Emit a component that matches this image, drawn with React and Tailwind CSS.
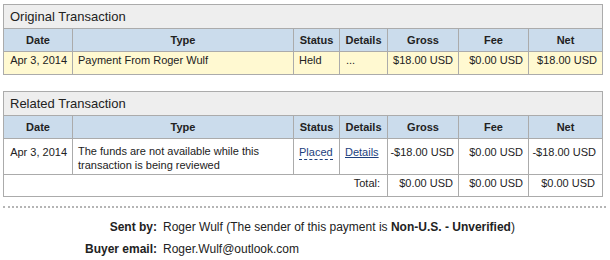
const COLS = [
  { key: 'date', label: 'Date', w: 'w-[69px]' },
  { key: 'type', label: 'Type', w: 'w-[221px]' },
  { key: 'status', label: 'Status', w: 'w-[46px]' },
  { key: 'details', label: 'Details', w: 'w-[48px]' },
  { key: 'gross', label: 'Gross', w: 'w-[71px]' },
  { key: 'fee', label: 'Fee', w: 'w-[70px]' },
  { key: 'net', label: 'Net', w: 'w-[74px]' },
]

const base = 'border border-[#ababab] px-[5px] align-top'
const cell = `${base} whitespace-nowrap`

function TxTable({ title, children }) {
  return (
    <table className="table-fixed border-collapse w-[600px] text-[11px] text-[#222]">
      <colgroup>
        {COLS.map((c) => (
          <col key={c.key} className={c.w} />
        ))}
      </colgroup>
      <thead>
        <tr>
          <th colSpan={7} className="border border-[#ababab] bg-[#eeeeee] text-left font-normal text-[13px] px-[6px] h-[24px]">
            {title}
          </th>
        </tr>
        <tr className="bg-[#cbdcec]">
          {COLS.map((c) => (
            <th key={c.key} className="border border-[#ababab] font-bold text-center h-[23px] px-[3px]">
              {c.label}
            </th>
          ))}
        </tr>
      </thead>
      <tbody>{children}</tbody>
    </table>
  )
}

export default function App() {
  return (
    <div className="w-[610px] h-[260px] bg-white pl-[3px] pt-[4px]" style={{ fontFamily: '"Liberation Sans", Arial, sans-serif' }}>
      <TxTable title="Original Transaction">
        <tr className="bg-[#fff9d1] h-[23px]">
          <td className={`${cell} align-middle text-right`}>Apr 3, 2014</td>
          <td className={`${cell} align-middle`}>Payment From Roger Wulf</td>
          <td className={`${cell} align-middle`}>Held</td>
          <td className={`${cell} align-middle pl-[6px]`}>...</td>
          <td className={`${cell} align-middle text-right`}>$18.00 USD</td>
          <td className={`${cell} align-middle text-right`}>$0.00 USD</td>
          <td className={`${cell} align-middle text-right`}>$18.00 USD</td>
        </tr>
      </TxTable>

      <div className="h-[16px]" />

      <TxTable title="Related Transaction">
        <tr className="h-[36px]">
          <td className={`${cell} text-right pt-[5px]`}>Apr 3, 2014</td>
          <td className={`${base} pt-[5px] leading-[14px]`}>The funds are not available while this transaction is being reviewed</td>
          <td className={`${cell} pt-[5px]`}>
            <span className="text-[#1c3f7e] border-b border-dashed border-[#1c3f7e] pb-[1px]">Placed</span>
          </td>
          <td className={`${cell} pt-[5px]`}>
            <span className="text-[#1c3f7e] underline">Details</span>
          </td>
          <td className={`${cell} text-right pt-[5px] pl-[2px] pr-[4px]`}>-$18.00 USD</td>
          <td className={`${cell} text-right pt-[5px]`}>$0.00 USD</td>
          <td className={`${cell} text-right pt-[5px] pl-[2px] pr-[6px]`}>-$18.00 USD</td>
        </tr>
        <tr className="h-[22px]">
          <td colSpan={4} className={`${cell} align-middle text-right pr-[7px]`}>Total:</td>
          <td className={`${cell} align-middle text-right`}>$0.00 USD</td>
          <td className={`${cell} align-middle text-right`}>$0.00 USD</td>
          <td className={`${cell} align-middle text-right pr-[7px]`}>$0.00 USD</td>
        </tr>
      </TxTable>

      <div className="mt-[9px] w-[603px] border-t-2 border-dotted border-[#b5b5b5]" />

      <div className="mt-[10px] text-[12px] text-[#222] flex flex-col gap-[4px]">
        <div className="flex">
          <div className="w-[154px] text-right font-bold">Sent by:</div>
          <div className="pl-[6px]">
            Roger Wulf (The sender of this payment is <b>Non-U.S. - Unverified</b>)
          </div>
        </div>
        <div className="flex">
          <div className="w-[154px] text-right font-bold">Buyer email:</div>
          <div className="pl-[6px]">Roger.Wulf@outlook.com</div>
        </div>
      </div>
    </div>
  )
}
